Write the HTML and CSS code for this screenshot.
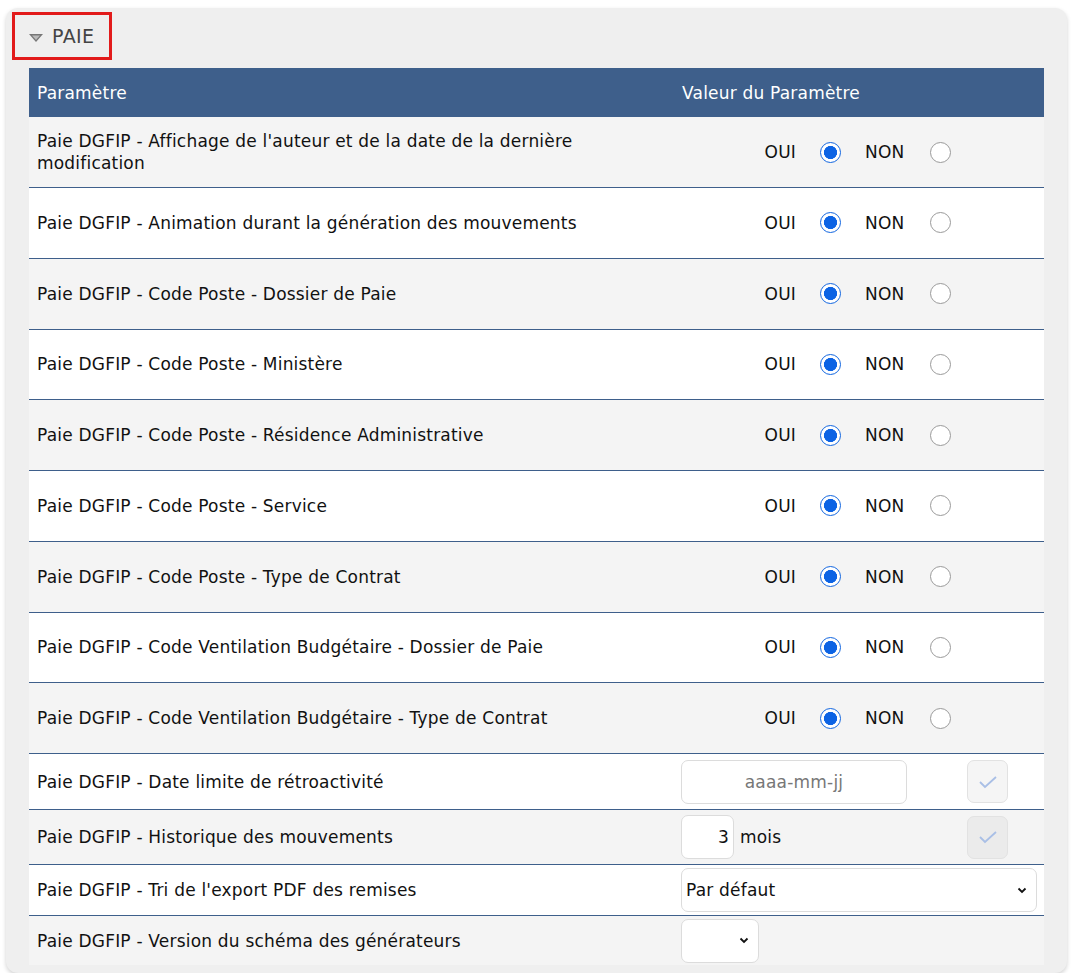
FILE: index.html
```html
<!DOCTYPE html>
<html lang="fr">
<head>
<meta charset="utf-8">
<title>Paramètres - Paie</title>
<link rel="stylesheet" href="styles.css">
</head>
<body>
<div class="card">
  <div class="section-title">
    <svg class="caret" width="16" height="10" viewBox="0 0 16 10"><path d="M1 1 L15 1 L8 9 Z" fill="#777"/><path d="M4 2.5 L12 2.5 L8 7 Z" fill="#bbb"/></svg>
    <span>PAIE</span>
  </div>
  <div class="table">
    <div class="row head">
      <div class="c1">Paramètre</div>
      <div class="c2">Valeur du Paramètre</div>
    </div>

    <div class="row r70 first odd">
      <div class="c1">Paie DGFIP - Affichage de l'auteur et de la date de la dernière modification</div>
      <div class="c2 radios"><span>OUI</span><span class="radio on"></span><span>NON</span><span class="radio"></span></div>
    </div>
    <div class="row r70">
      <div class="c1">Paie DGFIP - Animation durant la génération des mouvements</div>
      <div class="c2 radios"><span>OUI</span><span class="radio on"></span><span>NON</span><span class="radio"></span></div>
    </div>
    <div class="row r70 odd">
      <div class="c1">Paie DGFIP - Code Poste - Dossier de Paie</div>
      <div class="c2 radios"><span>OUI</span><span class="radio on"></span><span>NON</span><span class="radio"></span></div>
    </div>
    <div class="row r70">
      <div class="c1">Paie DGFIP - Code Poste - Ministère</div>
      <div class="c2 radios"><span>OUI</span><span class="radio on"></span><span>NON</span><span class="radio"></span></div>
    </div>
    <div class="row r70 odd">
      <div class="c1">Paie DGFIP - Code Poste - Résidence Administrative</div>
      <div class="c2 radios"><span>OUI</span><span class="radio on"></span><span>NON</span><span class="radio"></span></div>
    </div>
    <div class="row r70">
      <div class="c1">Paie DGFIP - Code Poste - Service</div>
      <div class="c2 radios"><span>OUI</span><span class="radio on"></span><span>NON</span><span class="radio"></span></div>
    </div>
    <div class="row r70 odd">
      <div class="c1">Paie DGFIP - Code Poste - Type de Contrat</div>
      <div class="c2 radios"><span>OUI</span><span class="radio on"></span><span>NON</span><span class="radio"></span></div>
    </div>
    <div class="row r70">
      <div class="c1">Paie DGFIP - Code Ventilation Budgétaire - Dossier de Paie</div>
      <div class="c2 radios"><span>OUI</span><span class="radio on"></span><span>NON</span><span class="radio"></span></div>
    </div>
    <div class="row r70 odd">
      <div class="c1">Paie DGFIP - Code Ventilation Budgétaire - Type de Contrat</div>
      <div class="c2 radios"><span>OUI</span><span class="radio on"></span><span>NON</span><span class="radio"></span></div>
    </div>

    <div class="row r56">
      <div class="c1">Paie DGFIP - Date limite de rétroactivité</div>
      <div class="c2 ctrl">
        <div class="date">aaaa-mm-jj</div>
        <div class="check"><svg width="20" height="14" viewBox="0 0 20 14"><path d="M2 7 L7 12 L18 2" fill="none" stroke="#a9bfe6" stroke-width="1.8"/></svg></div>
      </div>
    </div>
    <div class="row r55 odd">
      <div class="c1">Paie DGFIP - Historique des mouvements</div>
      <div class="c2 ctrl">
        <div class="num">3</div><span class="unit">mois</span>
        <div class="check dark"><svg width="20" height="14" viewBox="0 0 20 14"><path d="M2 7 L7 12 L18 2" fill="none" stroke="#a9bfe6" stroke-width="1.8"/></svg></div>
      </div>
    </div>
    <div class="row r51">
      <div class="c1">Paie DGFIP - Tri de l'export PDF des remises</div>
      <div class="c2 ctrl">
        <div class="select wide">Par défaut<svg class="chev" width="10" height="7" viewBox="0 0 10 7"><path d="M1.5 1.5 L5 5 L8.5 1.5" fill="none" stroke="#111" stroke-width="1.8"/></svg></div>
      </div>
    </div>
    <div class="row r50 odd last">
      <div class="c1">Paie DGFIP - Version du schéma des générateurs</div>
      <div class="c2 ctrl">
        <div class="select small"><svg class="chev" width="10" height="7" viewBox="0 0 10 7"><path d="M1.5 1.5 L5 5 L8.5 1.5" fill="none" stroke="#111" stroke-width="1.8"/></svg></div>
      </div>
    </div>
  </div>
</div>
</body>
</html>
```
FILE: styles.css
```css
html, body {
  margin: 0;
  padding: 0;
  background: #ffffff;
}
body {
  font-family: "DejaVu Sans", sans-serif;
  font-size: 17px;
  letter-spacing: 0.2px;
  color: #111;
  padding: 8px 24px 0 6px;
}
.card {
  width: 1061px;
  box-sizing: border-box;
  background: #efefef;
  border-radius: 12px;
  box-shadow: 0 2px 4px rgba(0,0,0,0.18);
  padding: 4px 23px 8px 23px;
}
.section-title {
  box-sizing: border-box;
  margin-left: -17px;
  width: 100px;
  height: 48px;
  border: 3px solid #e21b1b;
  display: flex;
  align-items: center;
  gap: 8px;
  padding-left: 13px;
  color: #444;
  font-size: 19px;
  letter-spacing: 0.4px;
}
.section-title .caret { margin-top: 3px; }
.table {
  margin-top: 8px;
  width: 1015px;
}
.row {
  display: grid;
  grid-template-columns: 645px 370px;
  background: #fff;
  border-top: 1px solid #3e5f8b;
  box-sizing: border-box;
}
.row.odd { background: #f4f4f4; }
.row.head {
  background: #3e5f8b;
  color: #fff;
  height: 49px;
  border-top: none;
}
.row.first { border-top: none; height: 70px; }
.c1, .c2 {
  display: flex;
  align-items: center;
  padding: 0 8px;
  line-height: 22px;
}
.c1 { padding-right: 40px; }
.r70 { height: 70.75px; }
.r56 { height: 56px; }
.r55 { height: 55px; }
.r51 { height: 51px; }
.r50 { height: 50px; }
.radios {
  justify-content: center;
  padding-left: 6px;
}
.radio {
  box-sizing: border-box;
  width: 21px;
  height: 21px;
  border-radius: 50%;
  border: 1px solid #9a9a9a;
  background: #fff;
  margin: 0 24px 0 24px;
}
.radio:last-child { margin: 0 0 0 26px; }
.radio.on {
  border: 1.5px solid #1266e0;
  background: radial-gradient(circle, #0c63e4 0 6.3px, #fff 6.8px);
}
.ctrl {
  padding-left: 7px;
  padding-right: 7px;
}
.date {
  box-sizing: border-box;
  width: 226px;
  height: 44px;
  border: 1px solid #dcdcdc;
  border-radius: 7px;
  background: #fff;
  color: #777;
  display: flex;
  align-items: center;
  justify-content: center;
}
.check {
  box-sizing: border-box;
  width: 41px;
  height: 43px;
  border: 1px solid #e2e2e2;
  border-radius: 7px;
  background: #f5f5f5;
  display: flex;
  align-items: center;
  justify-content: center;
  margin-left: auto;
  margin-right: 29px;
}
.check.dark { background: #ebebeb; }
.num {
  box-sizing: border-box;
  width: 53px;
  height: 44px;
  border: 1px solid #dcdcdc;
  border-radius: 7px;
  background: #fff;
  display: flex;
  align-items: center;
  justify-content: flex-end;
  padding-right: 4px;
}
.unit { margin-left: 6px; }
.select {
  box-sizing: border-box;
  height: 44px;
  border: 1px solid #dcdcdc;
  border-radius: 7px;
  background: #fff;
  display: flex;
  align-items: center;
  padding-left: 4px;
  padding-right: 9px;
}
.select .chev { margin-left: auto; }
.select.wide { width: 357px; }
.select.small { width: 78px; }
```
